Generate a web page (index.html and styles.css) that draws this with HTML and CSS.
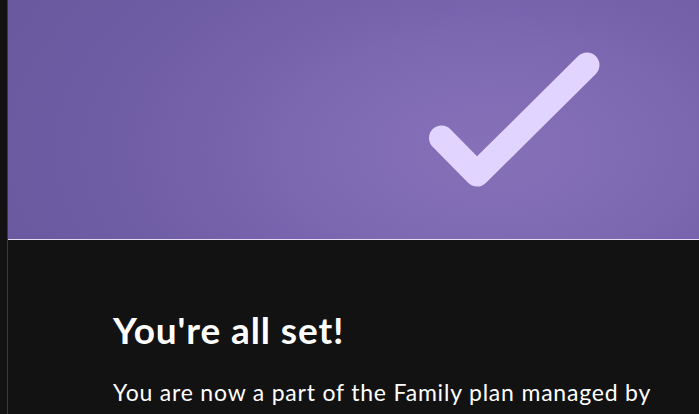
FILE: index.html
```html
<!DOCTYPE html>
<html>
<head>
<meta charset="utf-8">
<link rel="stylesheet" href="styles.css">
</head>
<body>
<div class="panel">
  <div class="hero">
    <svg class="check" width="691" height="239" viewBox="0 0 691 239">
      <polyline points="433.5,138 469,174 579,65" fill="none" stroke="#e1d5ff" stroke-width="25" stroke-linecap="round" stroke-linejoin="round"/>
    </svg>
  </div>
  <div class="content">
    <h1 class="title">You're all set!</h1>
    <p class="text">You are now a part of the Family plan managed by</p>
  </div>
</div>
</body>
</html>
```
FILE: styles.css
```css
html, body {
  margin: 0;
  padding: 0;
  background: #121212;
  height: 100%;
  overflow: hidden;
}
.panel {
  margin-left: 7px;
  border-left: 1px solid #3a3a3a;
  min-height: 100%;
  font-family: Lato, "Noto Sans", sans-serif;
}
.hero {
  height: 239px;
  border-bottom: 1px solid #e4dcef;
  background: radial-gradient(ellipse 520px 300px at 480px 150px, #8671b9 0%, #7d68b2 35%, #6f5da6 70%, #6a599f 100%);
}
.check {
  display: block;
}
.content {
  padding: 68px 0 0 105px;
  color: #ffffff;
}
.title {
  margin: 0;
  font-size: 37px;
  font-weight: 700;
  line-height: 44px;
  letter-spacing: 0.9px;
}
.text {
  margin: 25px 0 0;
  font-size: 23px;
  line-height: 30px;
  letter-spacing: 0.8px;
}
```
